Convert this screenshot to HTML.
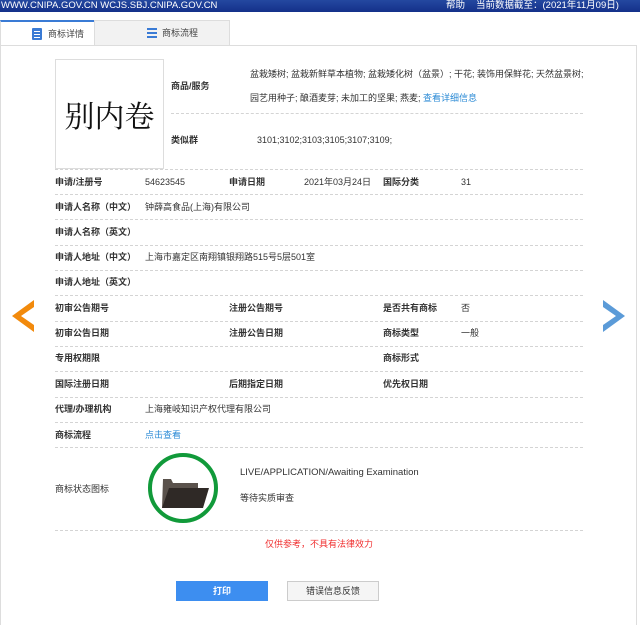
<!DOCTYPE html>
<html><head><meta charset="utf-8"><style>
*{margin:0;padding:0;box-sizing:border-box}
body{width:640px;height:614px;overflow:hidden;background:#fff;font-family:"Liberation Sans","Noto Sans CJK SC",sans-serif;font-size:9px;color:#333;position:relative}
.a{position:absolute;white-space:nowrap;line-height:12px}
.b{font-weight:bold;color:#333}
.ln{position:absolute;left:55px;width:528px;border-top:1px dashed #d4d4d4;height:0}
</style></head><body>
<div class="a" style="left:0;top:0;width:640px;height:12px;background:linear-gradient(#2448a0,#14308a);color:#fff;font-size:9.5px;line-height:12px;padding-left:1px">WWW.CNIPA.GOV.CN WCJS.SBJ.CNIPA.GOV.CN<span style="position:absolute;left:446px">帮助</span><span style="position:absolute;left:476px">当前数据截至：(2021年11月09日)</span></div>
<div class="a" style="left:0;top:20px;width:94px;height:26px;background:#fff;border-top:2px solid #3a7bd5;border-left:1px solid #ddd"></div>
<div class="a" style="left:94px;top:20px;width:136px;height:26px;background:#f2f2f2;border:1px solid #ddd;border-bottom:none"></div>
<div class="a" style="left:0;top:45px;width:637px;height:580px;border:1px solid #ddd;border-bottom:none"></div>
<div class="a" style="left:32px;top:28px;width:10px;height:12px;background:#3a7bd5;border-radius:1px"></div>
<div class="a" style="left:34px;top:31px;width:6px;height:1px;background:#fff"></div><div class="a" style="left:34px;top:34px;width:6px;height:1px;background:#fff"></div><div class="a" style="left:34px;top:37px;width:6px;height:1px;background:#fff"></div>
<div class="a" style="left:48px;top:28px;color:#444">商标详情</div>
<div class="a" style="left:147px;top:28px;width:10px;height:10px;background:repeating-linear-gradient(#3a7bd5 0 2px,transparent 2px 4px)"></div>
<div class="a" style="left:162px;top:27px;color:#444">商标流程</div>
<div class="a" style="left:55px;top:59px;width:109px;height:110px;border:1px solid #ddd;font-family:'Noto Serif CJK SC',serif;font-size:30px;line-height:108px;text-align:center;color:#111">别内卷</div>
<div class="a b" style="left:171px;top:80px">商品/服务</div>
<div class="a" style="left:250px;top:68px">盆栽矮树; 盆栽新鲜草本植物; 盆栽矮化树（盆景）; 干花; 装饰用保鲜花; 天然盆景树;</div>
<div class="a" style="left:250px;top:92px">园艺用种子; 酿酒麦芽; 未加工的坚果; 燕麦; <span style="color:#2a8ad5">查看详细信息</span></div>
<div class="ln" style="left:171px;width:412px;top:113px"></div>
<div class="a b" style="left:171px;top:134px">类似群</div>
<div class="a" style="left:257px;top:134px">3101;3102;3103;3105;3107;3109;</div>
<div class="ln" style="top:169px"></div>
<div class="a b" style="left:55px;top:176px">申请/注册号</div><div class="a" style="left:145px;top:176px">54623545</div>
<div class="a b" style="left:229px;top:176px">申请日期</div><div class="a" style="left:304px;top:176px">2021年03月24日</div>
<div class="a b" style="left:383px;top:176px">国际分类</div><div class="a" style="left:461px;top:176px">31</div>
<div class="ln" style="top:194px"></div>
<div class="a b" style="left:55px;top:201px">申请人名称（中文）</div><div class="a" style="left:145px;top:201px">钟薛高食品(上海)有限公司</div>
<div class="ln" style="top:219px"></div>
<div class="a b" style="left:55px;top:226px">申请人名称（英文）</div>
<div class="ln" style="top:245px"></div>
<div class="a b" style="left:55px;top:251px">申请人地址（中文）</div><div class="a" style="left:145px;top:251px">上海市嘉定区南翔镇银翔路515号5层501室</div>
<div class="ln" style="top:270px"></div>
<div class="a b" style="left:55px;top:276px">申请人地址（英文）</div>
<div class="ln" style="top:295px"></div>
<div class="a b" style="left:55px;top:302px">初审公告期号</div><div class="a b" style="left:229px;top:302px">注册公告期号</div><div class="a b" style="left:383px;top:302px">是否共有商标</div><div class="a" style="left:461px;top:302px">否</div>
<div class="ln" style="top:321px"></div>
<div class="a b" style="left:55px;top:327px">初审公告日期</div><div class="a b" style="left:229px;top:327px">注册公告日期</div><div class="a b" style="left:383px;top:327px">商标类型</div><div class="a" style="left:461px;top:327px">一般</div>
<div class="ln" style="top:346px"></div>
<div class="a b" style="left:55px;top:352px">专用权期限</div><div class="a b" style="left:383px;top:352px">商标形式</div>
<div class="ln" style="top:371px"></div>
<div class="a b" style="left:55px;top:378px">国际注册日期</div><div class="a b" style="left:229px;top:378px">后期指定日期</div><div class="a b" style="left:383px;top:378px">优先权日期</div>
<div class="ln" style="top:397px"></div>
<div class="a b" style="left:55px;top:403px">代理/办理机构</div><div class="a" style="left:145px;top:403px">上海雍岐知识产权代理有限公司</div>
<div class="ln" style="top:422px"></div>
<div class="a b" style="left:55px;top:429px">商标流程</div><div class="a" style="left:145px;top:429px;color:#2a8ad5">点击查看</div>
<div class="ln" style="top:447px"></div>
<div class="a" style="left:55px;top:483px">商标状态图标</div>
<svg class="a" style="left:146px;top:452px" width="74" height="74"><ellipse cx="37" cy="36" rx="33" ry="33" fill="none" stroke="#119a3a" stroke-width="4"/><path d="M16 56 L17 27 L25 27 L27 31 L52 31 L52 56Z" fill="#5a524c"/><path d="M16 56 L23 36 L63 36 L57 56Z" fill="#2f2926"/></svg>
<div class="a" style="left:240px;top:467px;font-size:9.5px">LIVE/APPLICATION/Awaiting Examination</div>
<div class="a" style="left:240px;top:492px">等待实质审查</div>
<div class="ln" style="top:530px"></div>
<div class="a" style="left:265px;top:538px;color:#f03030">仅供参考，不具有法律效力</div>
<div class="a" style="left:176px;top:581px;width:92px;height:20px;background:#3d8ef0;color:#fff;text-align:center;line-height:20px;font-weight:bold">打印</div>
<div class="a" style="left:287px;top:581px;width:92px;height:20px;background:#f5f5f5;border:1px solid #ccc;text-align:center;line-height:18px">错误信息反馈</div>
<svg class="a" style="left:12px;top:300px" width="24" height="32"><path d="M22 0 L22 7 L9 16 L22 25 L22 32 L0 16Z" fill="#f28a0c"/></svg>
<svg class="a" style="left:601px;top:300px" width="24" height="32"><path d="M2 0 L2 7 L15 16 L2 25 L2 32 L24 16Z" fill="#5b9bd8"/></svg>
</body></html>
